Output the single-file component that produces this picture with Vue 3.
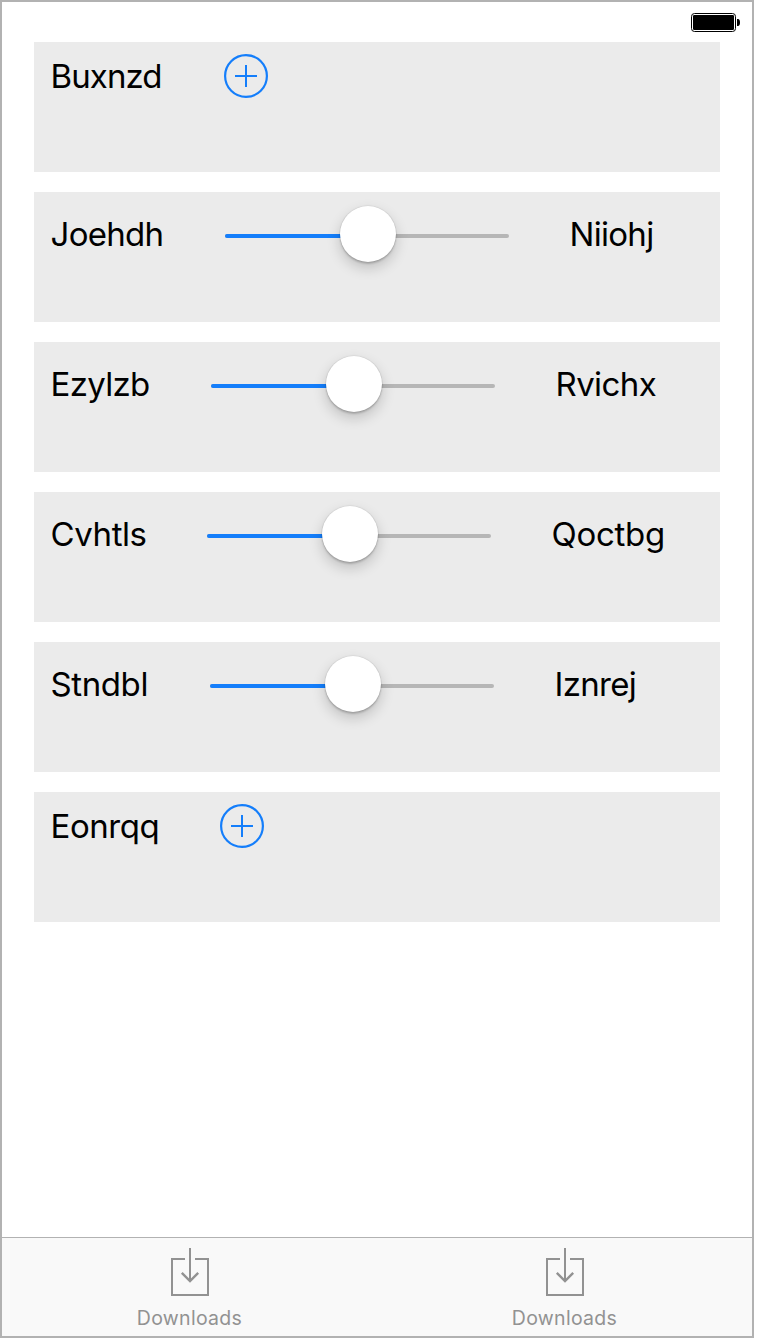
<script setup>
const rows = [
  { label: 'Buxnzd', width: 174, spacing: -0.9, kind: 'add' },
  { label: 'Joehdh', width: 175, spacing: -0.7, kind: 'slider', value: 'Niiohj', valueSpacing: -0.7 },
  { label: 'Ezylzb', width: 161, spacing: -0.7, kind: 'slider', value: 'Rvichx', valueSpacing: -0.6 },
  { label: 'Cvhtls', width: 157, spacing: -0.4, kind: 'slider', value: 'Qoctbg', valueSpacing: -0.3 },
  { label: 'Stndbl', width: 160, spacing: -0.4, kind: 'slider', value: 'Iznrej', valueSpacing: -0.7 },
  { label: 'Eonrqq', width: 170, spacing: -0.45, kind: 'add' }
]
const tabs = ['Downloads', 'Downloads']
</script>

<template>
  <div class="screen">
    <header class="status">
      <svg width="50" height="20" viewBox="0 0 50 20">
        <rect x="0.5" y="0.5" width="44" height="18" rx="3" fill="#fff" stroke="#000" />
        <rect x="2" y="2" width="41" height="15" rx="1.2" fill="#000" />
        <path d="M46 6h1c1.3 0 2 1.4 2 3.5s-.7 3.5-2 3.5h-1z" fill="#000" />
      </svg>
    </header>
    <main class="list">
      <section v-for="row in rows" :key="row.label" class="card" :class="row.kind">
        <span class="label" :style="{ width: row.width + 'px', letterSpacing: row.spacing + 'px' }">{{ row.label }}</span>
        <svg v-if="row.kind === 'add'" class="plus" width="44" height="44" viewBox="0 0 44 44">
          <circle cx="22" cy="22" r="20.9" />
          <path d="M11 22h22M22 11v22" />
        </svg>
        <template v-else>
          <div class="slider">
            <div class="track"><div class="filled"></div></div>
            <div class="knob"></div>
          </div>
          <span class="value" :style="{ letterSpacing: row.valueSpacing + 'px' }">{{ row.value }}</span>
        </template>
      </section>
    </main>
    <nav class="tabs">
      <div v-for="(tab, i) in tabs" :key="i" class="tab">
        <svg width="38" height="48" viewBox="0 0 38 48">
          <path d="M14 11H1v36h36V11H24M19 0v32" />
          <path class="arrow" d="M10.8 24.8l8.2 8.2 8.2-8.2" />
        </svg>
        <span>{{ tab }}</span>
      </div>
    </nav>
  </div>
</template>

<style>
body { background: #fff; }
</style>

<style scoped>
.screen {
  box-sizing: border-box;
  width: 754px;
  height: 1338px;
  border: 2px solid #b2b2b2;
  background: #fff;
  display: flex;
  flex-direction: column;
  font-family: Inter, "Liberation Sans", sans-serif;
  color: #000;
}
.status {
  height: 40px;
  box-sizing: border-box;
  padding: 11px 11px 0 0;
  display: flex;
  justify-content: flex-end;
}
.list {
  flex: 1;
  display: flex;
  flex-direction: column;
  gap: 20px;
  padding: 0 32px;
}
.card {
  height: 130px;
  box-sizing: border-box;
  background: #ebebeb;
  display: flex;
  align-items: flex-start;
  padding: 14px 0 0 16px;
  font-size: 33px;
  line-height: 40px;
  white-space: nowrap;
}
.card.slider { padding-top: 22px; }
.label,
.value {
  flex: none;
  box-sizing: border-box;
  padding-left: 0.5px;
}
.plus {
  margin-top: -2px;
  fill: none;
  stroke: #147efb;
  stroke-width: 2;
}
.plus circle { stroke-width: 2.2; }
div.slider {
  position: relative;
  flex: none;
  width: 284px;
  height: 40px;
  display: flex;
  align-items: center;
  margin-right: 60px;
}
.track {
  width: 284px;
  height: 4px;
  margin-top: 4px;
  border-radius: 2px;
  background: #b6b6b6;
  overflow: hidden;
}
.filled {
  width: 50%;
  height: 4px;
  background: #147efb;
}
.knob {
  position: absolute;
  left: 115px;
  top: -8px;
  width: 56px;
  height: 56px;
  border-radius: 50%;
  background: #fff;
  box-shadow: 0 0 1px 0.5px rgba(0, 0, 0, 0.1), 0 2px 2px rgba(0, 0, 0, 0.16), 0 6px 14px rgba(0, 0, 0, 0.19);
}
.tabs {
  flex: none;
  height: 99px;
  box-sizing: border-box;
  border-top: 1px solid #b2b2b2;
  background: #f9f9f9;
  display: flex;
}
.tab {
  flex: 1;
  display: flex;
  flex-direction: column;
  align-items: center;
  padding-top: 10px;
  color: #929292;
  font-size: 19.5px;
  letter-spacing: 0.3px;
  line-height: 24px;
}
.tab svg {
  fill: none;
  stroke: #929292;
  stroke-width: 2;
}
.tab .arrow { stroke-width: 2.4; }
.tab span { margin-top: 10px; }
</style>
